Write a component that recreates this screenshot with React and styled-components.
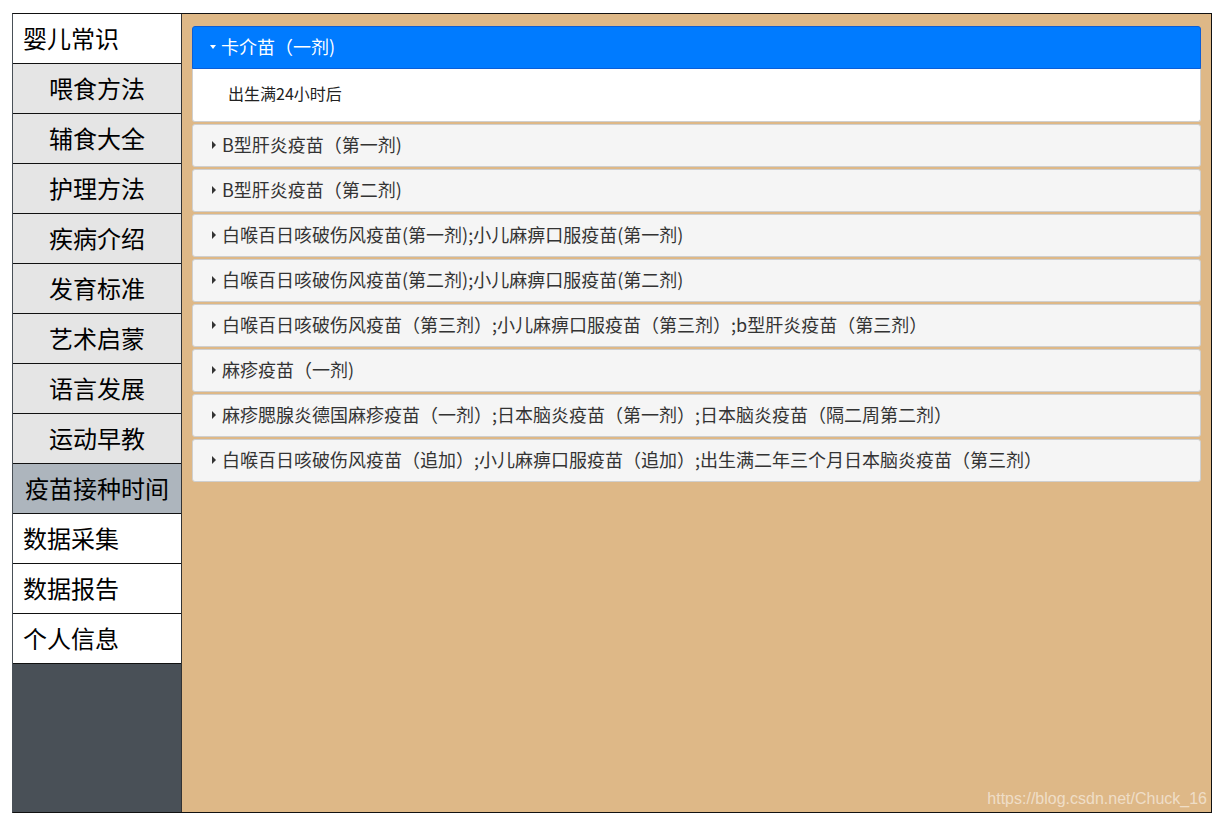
import React, { useState } from "react";
import styled, { createGlobalStyle } from "styled-components";

const GlobalStyle = createGlobalStyle`
  html, body { margin: 0; padding: 0; background: #fff; }
  body { font-family: "Noto Sans CJK SC", "Noto Sans", sans-serif; }
`;

const Frame = styled.div`
  position: relative;
  margin: 13px 0 0 12px;
  width: 1200px;
  height: 800px;
  box-sizing: border-box;
  border: 1px solid #111;
  border-left-color: #495057;
  display: flex;
`;

const Sidebar = styled.nav`
  width: 168px;
  flex: none;
  background: #495057;
  border-right: 1px solid #333;
  display: flex;
  flex-direction: column;
`;

const NavItem = styled.div`
  box-sizing: border-box;
  height: 50px;
  border-bottom: 1px solid #111;
  display: flex;
  align-items: center;
  justify-content: ${(p) => (p.$sub ? "center" : "flex-start")};
  padding: 0 0 2px ${(p) => (p.$sub ? "0" : "10px")};
  background: ${(p) => (p.$active ? "#adb5bd" : p.$sub ? "#e5e5e5" : "#fff")};
  color: #000;
  font-size: 24px;
  line-height: 1;
  cursor: pointer;
`;

const Main = styled.main`
  flex: 1;
  background: #deb887;
  padding: 12px 10px 0 10px;
  display: flex;
  flex-direction: column;
  gap: 2px;
`;

const Card = styled.div`
  display: flex;
  flex-direction: column;
`;

const Header = styled.div`
  box-sizing: border-box;
  height: 43px;
  display: flex;
  align-items: center;
  padding: 0 0 3px 16px;
  border: 1px solid ${(p) => (p.$open ? "#0b5ed7" : "#cfcfcf")};
  border-radius: ${(p) => (p.$open ? "3px 3px 0 0" : "3px")};
  background: ${(p) => (p.$open ? "#007bff" : "#f5f5f5")};
  color: ${(p) => (p.$open ? "#fff" : "#333")};
  font-size: 18px;
  cursor: pointer;
  white-space: nowrap;
`;

const Caret = styled.span`
  display: inline-block;
  width: 0;
  height: 0;
  ${(p) =>
    p.$open
      ? `border-left: 3.5px solid transparent; border-right: 3.5px solid transparent; border-top: 4px solid currentColor; margin: 1px 5px 0 1px;`
      : `border-top: 4px solid transparent; border-bottom: 4px solid transparent; border-left: 4px solid currentColor; margin: 1px 6px 0 3px;`}
`;

const Body = styled.div`
  border: 1px solid #cfcfcf;
  border-top: none;
  border-radius: 0 0 3px 3px;
  background: #fff;
  padding: 14px 35px 18px;
  height: 20px;
  font-size: 16px;
  line-height: 20px;
  color: #222;
`;

const Watermark = styled.div`
  position: absolute;
  right: 4px;
  bottom: 4px;
  font-family: "Liberation Sans", Arial, sans-serif;
  font-size: 16px;
  color: rgba(255, 255, 255, 0.55);
`;

const navItems = [
  { label: "婴儿常识" },
  { label: "喂食方法", sub: true },
  { label: "辅食大全", sub: true },
  { label: "护理方法", sub: true },
  { label: "疾病介绍", sub: true },
  { label: "发育标准", sub: true },
  { label: "艺术启蒙", sub: true },
  { label: "语言发展", sub: true },
  { label: "运动早教", sub: true },
  { label: "疫苗接种时间", sub: true, active: true },
  { label: "数据采集" },
  { label: "数据报告" },
  { label: "个人信息" },
];

const vaccines = [
  { title: "卡介苗（一剂)", body: "出生满24小时后" },
  { title: "B型肝炎疫苗（第一剂)" },
  { title: "B型肝炎疫苗（第二剂)" },
  { title: "白喉百日咳破伤风疫苗(第一剂);小儿麻痹口服疫苗(第一剂)" },
  { title: "白喉百日咳破伤风疫苗(第二剂);小儿麻痹口服疫苗(第二剂)" },
  { title: "白喉百日咳破伤风疫苗（第三剂）;小儿麻痹口服疫苗（第三剂）;b型肝炎疫苗（第三剂）" },
  { title: "麻疹疫苗（一剂)" },
  { title: "麻疹腮腺炎德国麻疹疫苗（一剂）;日本脑炎疫苗（第一剂）;日本脑炎疫苗（隔二周第二剂）" },
  { title: "白喉百日咳破伤风疫苗（追加）;小儿麻痹口服疫苗（追加）;出生满二年三个月日本脑炎疫苗（第三剂）" },
];

export default function App() {
  const [open, setOpen] = useState(0);
  return (
    <>
      <GlobalStyle />
      <Frame>
        <Sidebar>
          {navItems.map((n) => (
            <NavItem key={n.label} $sub={n.sub} $active={n.active}>
              {n.label}
            </NavItem>
          ))}
        </Sidebar>
        <Main>
          {vaccines.map((v, i) => {
            const isOpen = open === i;
            return (
              <Card key={i}>
                <Header $open={isOpen} onClick={() => setOpen(isOpen ? -1 : i)}>
                  <Caret $open={isOpen} />
                  {v.title}
                </Header>
                {isOpen && <Body>{v.body || ""}</Body>}
              </Card>
            );
          })}
        </Main>
        <Watermark>https://blog.csdn.net/Chuck_16</Watermark>
      </Frame>
    </>
  );
}
